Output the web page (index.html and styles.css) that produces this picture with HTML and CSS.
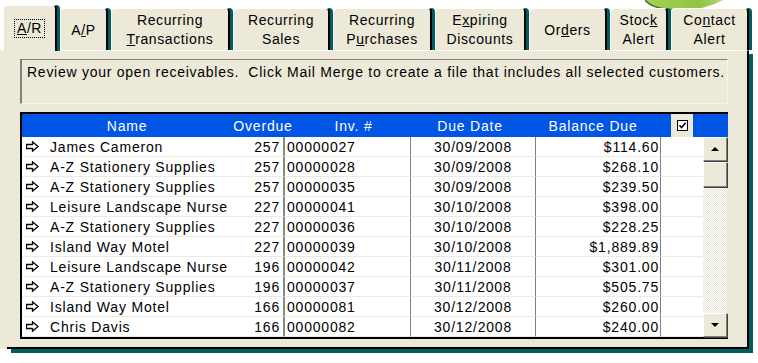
FILE: index.html
```html
<!DOCTYPE html>
<html lang="en">
<head>
<meta charset="utf-8">
<title>A/R - Open Receivables</title>
<link rel="stylesheet" href="styles.css">
</head>
<body>
<svg width="0" height="0" class="defs">
  <symbol id="arrow" viewBox="0 0 13 11">
    <path d="M0.5 3.5 H6.5 V0.8 L12 5.5 L6.5 10.2 V7.5 H0.5 Z" fill="#fff" stroke="#000" stroke-width="1.3"/>
  </symbol>
</svg>
<div class="window">
  <svg class="blob" width="80" height="11" viewBox="0 0 80 11">
    <defs>
      <linearGradient id="grn" x1="0" x2="1">
        <stop offset="0" stop-color="#a8d152"/>
        <stop offset="0.7" stop-color="#8fc443"/>
        <stop offset="1" stop-color="#b4d872"/>
      </linearGradient>
    </defs>
    <path d="M0 0 Q8 10 36 10 Q60 10 78 0 Z" fill="url(#grn)"/>
    <path d="M0 0 Q8 10 36 10" fill="none" stroke="#3f6f20" stroke-width="1.5"/>
  </svg>

  <div class="tabs">
    <div class="tab active t-ar"><span class="focus"><u>A</u>/R</span></div>
    <div class="tab t-ap"><span>A<u>/</u>P</span></div>
    <div class="tab t-rt"><span>Recurring<br><u>T</u>ransactions</span></div>
    <div class="tab t-rs"><span>Recurrin<u>g</u><br>Sales</span></div>
    <div class="tab t-rp"><span>Recurring<br>P<u>u</u>rchases</span></div>
    <div class="tab t-ed"><span>E<u>x</u>piring<br>Discounts</span></div>
    <div class="tab t-or"><span>Or<u>d</u>ers</span></div>
    <div class="tab t-sa"><span>Stoc<u>k</u><br>Alert</span></div>
    <div class="tab t-ca"><span>Co<u>n</u>tact<br>Alert</span></div>
  </div>

  <div class="panel">
    <div class="note">Review your open receivables.&nbsp; Click Mail Merge to create a file that includes all selected customers.</div>

    <div class="grid">
      <div class="head">
        <span class="h-name">Name</span>
        <span class="h-over">Overdue</span>
        <span class="h-inv">Inv. #</span>
        <span class="h-date">Due Date</span>
        <span class="h-bal">Balance Due</span>
        <span class="h-gap"></span>
        <span class="h-check">
          <svg width="11" height="11" viewBox="0 0 11 11">
            <rect x="0.5" y="0.5" width="10" height="10" fill="#fff" stroke="#000"/>
            <path d="M2.5 5.2 L4.6 7.6 L8.6 2.8" fill="none" stroke="#000" stroke-width="1.6"/>
          </svg>
        </span>
      </div>

      <div class="body">
        <div class="rows">
          <div class="row"><div class="c-name"><svg width="13" height="11"><use href="#arrow"/></svg>James Cameron</div><div class="c-over">257</div><div class="c-inv">00000027</div><div class="c-date">30/09/2008</div><div class="c-bal">$114.60</div><div class="c-x"></div></div>
          <div class="row"><div class="c-name"><svg width="13" height="11"><use href="#arrow"/></svg>A-Z Stationery Supplies</div><div class="c-over">257</div><div class="c-inv">00000028</div><div class="c-date">30/09/2008</div><div class="c-bal">$268.10</div><div class="c-x"></div></div>
          <div class="row"><div class="c-name"><svg width="13" height="11"><use href="#arrow"/></svg>A-Z Stationery Supplies</div><div class="c-over">257</div><div class="c-inv">00000035</div><div class="c-date">30/09/2008</div><div class="c-bal">$239.50</div><div class="c-x"></div></div>
          <div class="row"><div class="c-name"><svg width="13" height="11"><use href="#arrow"/></svg>Leisure Landscape Nurse</div><div class="c-over">227</div><div class="c-inv">00000041</div><div class="c-date">30/10/2008</div><div class="c-bal">$398.00</div><div class="c-x"></div></div>
          <div class="row"><div class="c-name"><svg width="13" height="11"><use href="#arrow"/></svg>A-Z Stationery Supplies</div><div class="c-over">227</div><div class="c-inv">00000036</div><div class="c-date">30/10/2008</div><div class="c-bal">$228.25</div><div class="c-x"></div></div>
          <div class="row"><div class="c-name"><svg width="13" height="11"><use href="#arrow"/></svg>Island Way Motel</div><div class="c-over">227</div><div class="c-inv">00000039</div><div class="c-date">30/10/2008</div><div class="c-bal">$1,889.89</div><div class="c-x"></div></div>
          <div class="row"><div class="c-name"><svg width="13" height="11"><use href="#arrow"/></svg>Leisure Landscape Nurse</div><div class="c-over">196</div><div class="c-inv">00000042</div><div class="c-date">30/11/2008</div><div class="c-bal">$301.00</div><div class="c-x"></div></div>
          <div class="row"><div class="c-name"><svg width="13" height="11"><use href="#arrow"/></svg>A-Z Stationery Supplies</div><div class="c-over">196</div><div class="c-inv">00000037</div><div class="c-date">30/11/2008</div><div class="c-bal">$505.75</div><div class="c-x"></div></div>
          <div class="row"><div class="c-name"><svg width="13" height="11"><use href="#arrow"/></svg>Island Way Motel</div><div class="c-over">166</div><div class="c-inv">00000081</div><div class="c-date">30/12/2008</div><div class="c-bal">$260.00</div><div class="c-x"></div></div>
          <div class="row"><div class="c-name"><svg width="13" height="11"><use href="#arrow"/></svg>Chris Davis</div><div class="c-over">166</div><div class="c-inv">00000082</div><div class="c-date">30/12/2008</div><div class="c-bal">$240.00</div><div class="c-x"></div></div>
        </div>
        <div class="scroll">
          <div class="sbtn"><span class="tri-up"></span></div>
          <div class="sbtn thumb"></div>
          <div class="sbtn down"><span class="tri-down"></span></div>
        </div>
      </div>
    </div>
  </div>
</div>
</body>
</html>
```

FILE: styles.css
```css
body { margin: 0; background: #fff; color: #000; font-family: "Liberation Sans", Arial, sans-serif; font-size: 14px; letter-spacing: 0.8px; }
.defs { position: absolute; }
.window { position: relative; width: 758px; height: 363px; }
.blob { position: absolute; left: 645px; top: 0; }

/* tab strip */
.tabs { position: relative; display: flex; align-items: flex-end; gap: 3px; height: 50px; padding-left: 3px; }
.tab { box-sizing: border-box; height: 42px; background: #ece9d8; border: 1px solid #fff; border-right: 2px solid #000; border-bottom: 0; border-radius: 4px 4px 0 0; box-shadow: 3px 0 0 #005e5e; display: flex; justify-content: center; align-items: center; text-align: center; line-height: 19px; letter-spacing: 0.6px; padding-top: 1px; }
.tab.active { height: 46px; margin-bottom: -1px; position: relative; z-index: 1; padding-top: 0; }
.focus { border: 1px dotted #000; padding: 0 2px; line-height: 17px; }
.t-ar { width: 54px; }
.t-ap { width: 48px; }
.t-rt { width: 119px; }
.t-rs { width: 97px; }
.t-rp { width: 99px; }
.t-ed { width: 91px; }
.t-or { width: 78px; }
.t-sa { width: 58px; }
.t-ca { width: 78px; }

/* panel */
.panel { box-sizing: border-box; margin-left: 7px; width: 742px; height: 299px; background: #ece9d8; border-top: 1px solid #fff; border-right: 2px solid #000; border-bottom: 2px solid #000; box-shadow: 4px 4px 0 #005e5e, -7px 0 0 #ece9d8; padding: 8px 0 0 13px; }
.note { box-sizing: border-box; width: 708px; height: 45px; border-top: 1px solid #808080; border-left: 2px solid #808080; border-right: 1px dotted #fff; border-bottom: 1px dotted #fff; padding: 4px 0 0 5px; line-height: 17px; letter-spacing: 0.74px; white-space: nowrap; }

/* grid */
.grid { box-sizing: border-box; width: 708px; margin-top: 8px; border-top: 2px solid #000; border-left: 2px solid #000; border-bottom: 2px solid #000; }
.head { display: flex; align-items: center; height: 23px; background: #0055e5; color: #fff; }
.head span { text-align: center; }
.h-name { width: 210px; }
.h-over { width: 62px; }
.h-inv { width: 119px; }
.h-date { width: 114px; }
.h-bal { width: 132px; }
.h-gap { width: 12px; }
.h-check { width: 22px; height: 23px; background: #ece9d8; display: flex; align-items: center; justify-content: center; }
.h-check svg { display: block; }

.body { display: flex; }
.rows { width: 681px; background: #fff; }
.row { display: grid; grid-template-columns: 208px 53px 127px 125px 125px 43px; height: 20px; }
.row > div { box-sizing: border-box; display: flex; align-items: center; border-bottom: 1px solid #ebeae3; white-space: nowrap; }
.c-name { padding-left: 4px; gap: 11px; }
.c-name svg { flex: none; }
.c-over { justify-content: flex-end; padding-right: 3px; }
.c-inv { border-left: 2px solid #8a8a8a; padding-left: 2px; }
.c-date { border-left: 1px solid #808080; justify-content: center; }
.c-bal { border-left: 1px solid #808080; justify-content: flex-end; padding-right: 1px; }
.c-x { border-left: 1px solid #808080; }

/* scrollbar */
.scroll { width: 24px; display: flex; flex-direction: column; background: repeating-conic-gradient(#fff 0 25%, #e4e2d4 0 50%) 0 0 / 2px 2px; }
.sbtn { box-sizing: border-box; height: 24px; background: #ece9d8; border: 1px solid; border-color: #fff #808080 #808080 #fff; box-shadow: 1px 1px 0 #404040; display: flex; align-items: center; justify-content: center; }
.thumb { height: 25px; margin-top: 1px; }
.down { margin-top: auto; }
.tri-up { width: 0; height: 0; border-left: 4px solid transparent; border-right: 4px solid transparent; border-bottom: 4px solid #000; }
.tri-down { width: 0; height: 0; border-left: 4px solid transparent; border-right: 4px solid transparent; border-top: 4px solid #000; }
```
